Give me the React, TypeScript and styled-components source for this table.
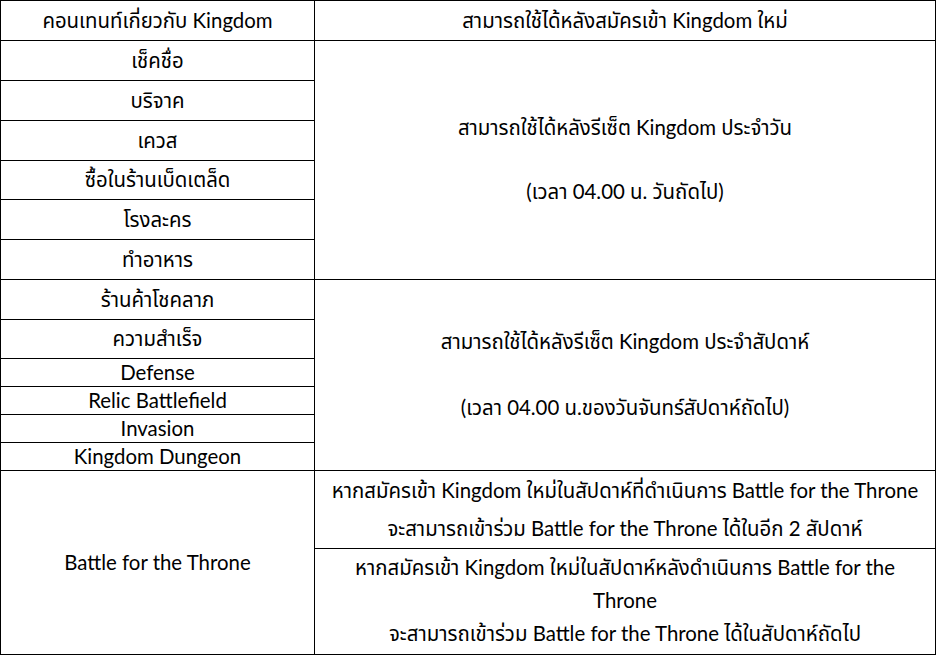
import React from "react";
import styled, { createGlobalStyle } from "styled-components";

const GlobalStyle = createGlobalStyle`
  html, body {
    margin: 0;
    padding: 0;
    background: #ffffff;
  }
  body {
    font-family: Lato, "Noto Sans", "Noto Sans Thai", sans-serif;
    color: #000000;
  }
`;

const Table = styled.div`
  display: grid;
  grid-template-columns: 314px 621px;
  grid-template-rows: 40px 40px 40px 40px 39px 40px 40px 40px 39px 28px 28px 28px 28px 78px 106px;
  width: 936px;
  height: 655px;
  box-sizing: border-box;
  border-top: 1px solid #000;
  border-left: 1px solid #000;
`;

const Cell = styled.div<{ $col: number; $row: number; $span?: number; $lh?: number }>`
  grid-column: ${(p) => p.$col};
  grid-row: ${(p) => p.$row} / span ${(p) => p.$span ?? 1};
  display: flex;
  flex-direction: column;
  align-items: center;
  justify-content: center;
  text-align: center;
  border-right: 1px solid #000;
  border-bottom: 1px solid #000;
  padding-bottom: 2px;
  box-sizing: border-box;
  font-size: 20.4px;
  line-height: ${(p) => p.$lh ?? 26}px;
  white-space: nowrap;
  overflow: hidden;
`;

const Line = styled.div`
  min-height: 1em;
`;

const leftRows: { label: string; row: number; span?: number }[] = [
  { label: "เช็คชื่อ", row: 2 },
  { label: "บริจาค", row: 3 },
  { label: "เควส", row: 4 },
  { label: "ซื้อในร้านเบ็ดเตล็ด", row: 5 },
  { label: "โรงละคร", row: 6 },
  { label: "ทำอาหาร", row: 7 },
  { label: "ร้านค้าโชคลาภ", row: 8 },
  { label: "ความสำเร็จ", row: 9 },
  { label: "Defense", row: 10 },
  { label: "Relic Battlefield", row: 11 },
  { label: "Invasion", row: 12 },
  { label: "Kingdom Dungeon", row: 13 },
  { label: "Battle for the Throne", row: 14, span: 2 },
];

export default function App() {
  return (
    <>
      <GlobalStyle />
      <Table>
        <Cell $col={1} $row={1}>คอนเทนท์เกี่ยวกับ Kingdom</Cell>
        <Cell $col={2} $row={1}>สามารถใช้ได้หลังสมัครเข้า Kingdom ใหม่</Cell>

        {leftRows.map((r) => (
          <Cell key={r.label} $col={1} $row={r.row} $span={r.span}>
            {r.label}
          </Cell>
        ))}

        <Cell $col={2} $row={2} $span={6} $lh={32}>
          <Line>สามารถใช้ได้หลังรีเซ็ต Kingdom ประจำวัน</Line>
          <Line>&nbsp;</Line>
          <Line>(เวลา 04.00 น. วันถัดไป)</Line>
        </Cell>
        <Cell $col={2} $row={8} $span={6} $lh={33}>
          <Line>สามารถใช้ได้หลังรีเซ็ต Kingdom ประจำสัปดาห์</Line>
          <Line>&nbsp;</Line>
          <Line>(เวลา 04.00 น.ของวันจันทร์สัปดาห์ถัดไป)</Line>
        </Cell>
        <Cell $col={2} $row={14} $lh={38}>
          <Line>หากสมัครเข้า Kingdom ใหม่ในสัปดาห์ที่ดำเนินการ Battle for the Throne</Line>
          <Line>จะสามารถเข้าร่วม Battle for the Throne ได้ในอีก 2 สัปดาห์</Line>
        </Cell>
        <Cell $col={2} $row={15} $lh={33}>
          <Line>หากสมัครเข้า Kingdom ใหม่ในสัปดาห์หลังดำเนินการ Battle for the</Line>
          <Line>Throne</Line>
          <Line>จะสามารถเข้าร่วม Battle for the Throne ได้ในสัปดาห์ถัดไป</Line>
        </Cell>
      </Table>
    </>
  );
}
